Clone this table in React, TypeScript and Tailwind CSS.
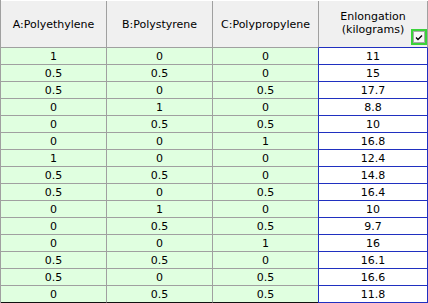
import React from "react";

const rows: [string, string, string, string][] = [
  ["1", "0", "0", "11"],
  ["0.5", "0.5", "0", "15"],
  ["0.5", "0", "0.5", "17.7"],
  ["0", "1", "0", "8.8"],
  ["0", "0.5", "0.5", "10"],
  ["0", "0", "1", "16.8"],
  ["1", "0", "0", "12.4"],
  ["0.5", "0.5", "0", "14.8"],
  ["0.5", "0", "0.5", "16.4"],
  ["0", "1", "0", "10"],
  ["0", "0.5", "0.5", "9.7"],
  ["0", "0", "1", "16"],
  ["0.5", "0.5", "0", "16.1"],
  ["0.5", "0", "0.5", "16.6"],
  ["0", "0.5", "0.5", "11.8"],
];

export default function App() {
  return (
    <div
      className="w-[428px] h-[303px] overflow-hidden bg-white text-black text-[11px] leading-[13px]"
      style={{ fontFamily: '"DejaVu Sans", Verdana, sans-serif' }}
    >
      <div className="flex flex-col border-l border-[#a0a0a0] w-[428px]">
        {/* header */}
        <div className="flex h-[48px] border-t border-white bg-[#f0f0f0]">
          <div className="w-[106px] border-r border-b border-[#a0a0a0] flex items-center justify-center">
            A:Polyethylene
          </div>
          <div className="w-[106px] border-r border-b border-[#a0a0a0] flex items-center justify-center">
            B:Polystyrene
          </div>
          <div className="w-[105px] border-b border-[#a0a0a0] flex items-center justify-center">
            C:Polypropylene
          </div>
          <div className="relative w-[110px] border-l border-r border-[#a0a0a0] border-b-[#2030c0] border-b flex flex-col items-center justify-center pb-[2px]">
            <span>Enlongation</span>
            <span>(kilograms)</span>
            <div className="absolute right-0 top-[28px] w-[16px] h-[16px] border-2 border-[#3ad23a] bg-[#f4f4f4] flex items-center justify-center">
              <div className="w-[12px] h-[12px] border border-[#a8a8a8] bg-[#f8f8f8] flex items-center justify-center">
                <svg width="8" height="7" viewBox="0 0 8 7">
                  <path d="M1 3.5 L3 5.5 L7 1.5" stroke="#000" strokeWidth="1.3" fill="none" />
                </svg>
              </div>
            </div>
          </div>
        </div>
        {rows.map((r, i) => {
          const last = i === rows.length - 1;
          const gb = last ? "border-b-[#101010]" : "border-b-[#a0a0a0]";
          return (
            <div key={i} className="flex h-[17px]">
              <div className={`w-[106px] bg-[#e0ffe0] border-r border-r-[#a0a0a0] border-b ${gb} flex items-center justify-center`}>
                {r[0]}
              </div>
              <div className={`w-[106px] bg-[#e0ffe0] border-r border-r-[#a0a0a0] border-b ${gb} flex items-center justify-center`}>
                {r[1]}
              </div>
              <div className={`w-[105px] bg-[#e0ffe0] border-b ${gb} flex items-center justify-center`}>
                {r[2]}
              </div>
              <div className="w-[110px] bg-white border-l border-r border-b border-[#2030c0] flex items-center justify-center">
                {r[3]}
              </div>
            </div>
          );
        })}
      </div>
    </div>
  );
}
